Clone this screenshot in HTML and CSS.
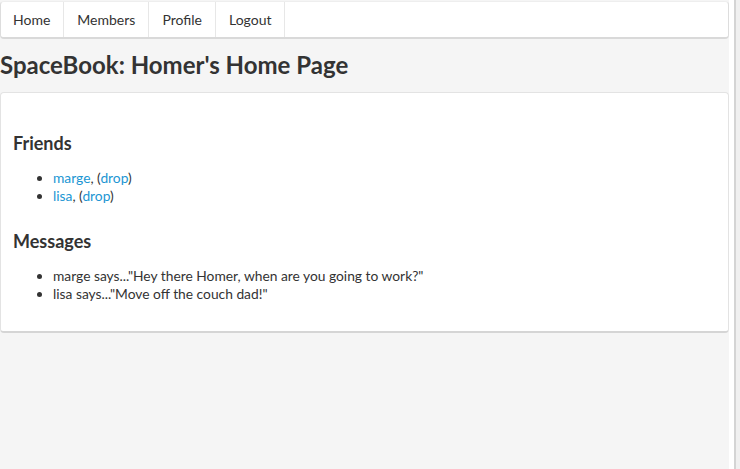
FILE: index.html
```html
<!DOCTYPE html>
<html>
<head>
<meta charset="utf-8">
<link rel="stylesheet" href="styles.css">
</head>
<body>
<div class="frame">
  <div class="page">
    <nav class="navbar">
      <a class="nav-item" href="#">Home</a>
      <a class="nav-item" href="#">Members</a>
      <a class="nav-item" href="#">Profile</a>
      <a class="nav-item" href="#">Logout</a>
    </nav>
    <h1 class="title">SpaceBook: Homer's Home Page</h1>
    <div class="panel">
      <h3 class="section-title">Friends</h3>
      <ul class="list">
        <li><a href="#">marge</a>, (<a href="#">drop</a>)</li>
        <li><a href="#">lisa</a>, (<a href="#">drop</a>)</li>
      </ul>
      <h3 class="section-title">Messages</h3>
      <ul class="list">
        <li>marge says..."Hey there Homer, when are you going to work?"</li>
        <li>lisa says..."Move off the couch dad!"</li>
      </ul>
    </div>
  </div>
  <div class="edge"><div class="edge-line"></div></div>
</div>
</body>
</html>
```
FILE: styles.css
```css
html, body {
  margin: 0;
  padding: 0;
  height: 100%;
}
body {
  font-family: Lato, "Open Sans", sans-serif;
  color: #333;
  background: #fff;
  font-size: 14px;
  line-height: 18px;
}
.frame {
  display: flex;
  height: 469px;
  overflow: hidden;
}
.page {
  width: 729px;
  background: #f5f5f5;
  padding-top: 1px;
  box-sizing: border-box;
}
.edge {
  flex: 1;
  display: flex;
  padding-left: 5px;
  background: #fff;
}
.edge-line {
  width: 2px;
  background: #d4d4d4;
}
.edge::after {
  content: "";
  flex: 1;
  background: #f0f0f0;
}
.navbar {
  display: flex;
  background: #fff;
  border: 1px solid #ddd;
  border-top-color: #eee;
  border-bottom: 2px solid #d9d9d9;
  border-radius: 4px;
  box-sizing: border-box;
  height: 38px;
}
.nav-item {
  display: block;
  padding: 0 13px 0 12px;
  line-height: 35px;
  color: #333;
  text-decoration: none;
  border-right: 1px solid #e7e7e7;
  font-size: 14px;
}
.nav-item + .nav-item {
  padding-left: 13px;
}
.title {
  margin: 11px 0 13px 0;
  font-size: 24px;
  line-height: 29px;
  font-weight: 700;
  color: #333;
}
.panel {
  background: #fff;
  border: 1px solid #e3e3e3;
  border-bottom: 2px solid #d5d5d5;
  border-radius: 4px;
  padding: 39px 12px 28px 12px;
}
.section-title {
  margin: 0 0 15px 0;
  font-size: 18px;
  line-height: 22px;
  font-weight: 700;
}
.list {
  margin: 0 0 25px 0;
  padding-left: 40px;
  font-size: 13.8px;
}
.list:last-child {
  margin-bottom: 0;
}
.list li {
  line-height: 18px;
}
.list a {
  color: #2196d3;
  text-decoration: none;
}
```
